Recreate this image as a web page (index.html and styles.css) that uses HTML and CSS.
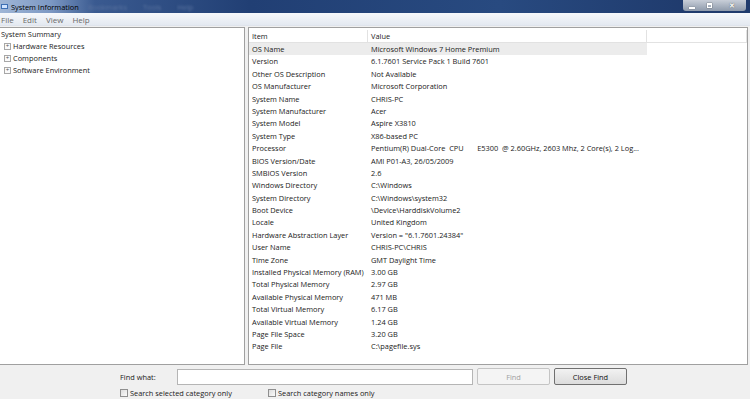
FILE: index.html
```html
<!DOCTYPE html>
<html>
<head>
<meta charset="utf-8">
<link rel="stylesheet" href="styles.css">
</head>
<body>
<div class="window">
  <div class="titlebar">
    <div class="title">
      <svg class="appicon" width="7" height="7" viewBox="0 0 7 7"><rect x="0" y="1" width="7" height="5" fill="#3c6fb4"/><rect x="1" y="2" width="5" height="3" fill="#cfe3ff"/></svg>
      <span>System Information</span>
    </div>
    <div class="ghost">
      <span>Bookmarks</span><span>Tools</span><span>Help</span>
    </div>
    <div class="controls">
      <span class="ctl min"><i></i></span>
      <span class="ctl max"><i></i></span>
      <span class="ctl close">&#x2715;</span>
    </div>
  </div>
  <div class="menubar">
    <span>File</span><span>Edit</span><span>View</span><span>Help</span>
  </div>
  <div class="main">
    <div class="tree">
      <div class="node root">System Summary</div>
      <div class="node"><span class="plus">+</span>Hardware Resources</div>
      <div class="node"><span class="plus">+</span>Components</div>
      <div class="node"><span class="plus">+</span>Software Environment</div>
    </div>
    <div class="list">
      <div class="head">
        <div class="hc c1">Item</div>
        <div class="hc c2">Value</div>
        <div class="hc c3"></div>
      </div>
      <div class="rows">
        <div class="row sel"><div class="c1">OS Name</div><div class="c2">Microsoft Windows 7 Home Premium</div></div>
        <div class="row"><div class="c1">Version</div><div class="c2">6.1.7601 Service Pack 1 Build 7601</div></div>
        <div class="row"><div class="c1">Other OS Description</div><div class="c2">Not Available</div></div>
        <div class="row"><div class="c1">OS Manufacturer</div><div class="c2">Microsoft Corporation</div></div>
        <div class="row"><div class="c1">System Name</div><div class="c2">CHRIS-PC</div></div>
        <div class="row"><div class="c1">System Manufacturer</div><div class="c2">Acer</div></div>
        <div class="row"><div class="c1">System Model</div><div class="c2">Aspire X3810</div></div>
        <div class="row"><div class="c1">System Type</div><div class="c2">X86-based PC</div></div>
        <div class="row"><div class="c1">Processor</div><div class="c2">Pentium(R) Dual-Core&nbsp; CPU&nbsp;&nbsp;&nbsp;&nbsp;&nbsp;&nbsp; E5300&nbsp; @ 2.60GHz, 2603 Mhz, 2 Core(s), 2 Log...</div></div>
        <div class="row"><div class="c1">BIOS Version/Date</div><div class="c2">AMI P01-A3, 26/05/2009</div></div>
        <div class="row"><div class="c1">SMBIOS Version</div><div class="c2">2.6</div></div>
        <div class="row"><div class="c1">Windows Directory</div><div class="c2">C:\Windows</div></div>
        <div class="row"><div class="c1">System Directory</div><div class="c2">C:\Windows\system32</div></div>
        <div class="row"><div class="c1">Boot Device</div><div class="c2">\Device\HarddiskVolume2</div></div>
        <div class="row"><div class="c1">Locale</div><div class="c2">United Kingdom</div></div>
        <div class="row"><div class="c1">Hardware Abstraction Layer</div><div class="c2">Version = "6.1.7601.24384"</div></div>
        <div class="row"><div class="c1">User Name</div><div class="c2">CHRIS-PC\CHRIS</div></div>
        <div class="row"><div class="c1">Time Zone</div><div class="c2">GMT Daylight Time</div></div>
        <div class="row"><div class="c1">Installed Physical Memory (RAM)</div><div class="c2">3.00 GB</div></div>
        <div class="row"><div class="c1">Total Physical Memory</div><div class="c2">2.97 GB</div></div>
        <div class="row"><div class="c1">Available Physical Memory</div><div class="c2">471 MB</div></div>
        <div class="row"><div class="c1">Total Virtual Memory</div><div class="c2">6.17 GB</div></div>
        <div class="row"><div class="c1">Available Virtual Memory</div><div class="c2">1.24 GB</div></div>
        <div class="row"><div class="c1">Page File Space</div><div class="c2">3.20 GB</div></div>
        <div class="row"><div class="c1">Page File</div><div class="c2">C:\pagefile.sys</div></div>
      </div>
    </div>
  </div>
  <div class="find">
    <div class="findrow">
      <label class="findlabel">Find what:</label>
      <div class="input"></div>
      <div class="btn disabled">Find</div>
      <div class="btn">Close Find</div>
    </div>
    <div class="checks">
      <label class="chk first"><span class="box"></span>Search selected category only</label>
      <label class="chk"><span class="box"></span>Search category names only</label>
    </div>
  </div>
</div>
</body>
</html>
```
FILE: styles.css
```css
* { box-sizing: border-box; }
html, body { margin: 0; padding: 0; }
body {
  width: 750px;
  height: 399px;
  overflow: hidden;
  font-family: "Open Sans", "Noto Sans", sans-serif;
  font-size: 7.4px;
  color: #1a1a1a;
  background: #f0f0f0;
}
.window { width: 750px; height: 399px; display: flex; flex-direction: column; }

.titlebar {
  height: 13px;
  flex: none;
  display: flex;
  align-items: center;
  background: linear-gradient(90deg, #9fb6d6 0px, #7d99c4 50px, #3a5a90 95px, #213f74 250px, #284a80 500px, #1f3a6c 700px);
}
.title { display: flex; align-items: center; gap: 3px; padding-left: 1px; width: 88px; color: #000; flex: none; }
.title span { line-height: 12px; }
.ghost { display: flex; gap: 16px; color: #5b74a0; filter: blur(1.2px); }
.controls { margin-left: auto; display: flex; height: 11px; align-self: flex-start; background: linear-gradient(#c8ced8, #8e9aab); border-radius: 0 0 3px 3px; margin-right: 4px; width: 63px; }
.ctl { flex: 1; display: flex; align-items: center; justify-content: center; color: #fff; font-size: 7px; line-height: 11px; }
.ctl.close { flex: 1.6; font-weight: bold; color: #fff; text-shadow: 0 0 1px #333; }
.ctl.min i { display: block; width: 6px; height: 2px; background: #fff; margin-top: 4px; box-shadow: 0 0 1px #333; }
.ctl.max i { display: block; width: 5px; height: 5px; border: 1px solid #fff; border-top-width: 2px; box-shadow: 0 0 1px #333; }

.menubar {
  height: 13px;
  flex: none;
  display: flex;
  gap: 9px;
  padding-left: 1px;
  align-items: center;
  background: linear-gradient(#f6f8fb, #e4e9f1);
  color: #6a6a6a;
  font-size: 8px;
  border-bottom: 1px solid #dfe4ec;
}

.main { flex: 1; display: flex; gap: 3px; padding-top: 1px; min-height: 0; }
.tree {
  width: 245px;
  background: #fff;
  border: 1px solid #a0a0a0;
  border-left: none;
  padding-top: 0px;
}
.node { height: 12px; line-height: 12px; display: flex; align-items: center; padding-left: 4px; }
.node.root { padding-left: 1px; }
.plus {
  width: 7px; height: 7px; border: 1px solid #a7a7a7; font-size: 6px; line-height: 5px;
  display: inline-flex; justify-content: center; color: #555; margin-right: 2px; background: #fafafa;
}

.list {
  width: 500px;
  background: #fff;
  border: 1px solid #a0a0a0;
  display: flex;
  flex-direction: column;
  padding-top: 2px;
}
.head { display: flex; height: 13px; border-bottom: 1px solid #e2e2e2; flex: none; }
.hc { line-height: 12px; padding-left: 3px; border-right: 1px solid #e2e2e2; }
.c1 { width: 119px; flex: none; padding-left: 3px; white-space: nowrap; }
.c2 { width: 279px; flex: none; white-space: nowrap; overflow: hidden; }
.hc.c2 { padding-left: 3px; }
.c3 { flex: 1; }
.rows { display: flex; flex-direction: column; }
.row { display: flex; height: 12.4px; line-height: 12.4px; }
.row .c1 { padding-left: 3px; }
.row .c2 { padding-left: 3px; }
.row.sel { background: linear-gradient(90deg, #ececec 398px, transparent 398px); }

.find { height: 34px; flex: none; padding-left: 120px; padding-top: 3px; display: flex; flex-direction: column; gap: 3px; }
.findrow { display: flex; align-items: center; height: 17px; }
.findlabel { width: 57px; }
.input { width: 296px; height: 16px; background: #fff; border: 1px solid #b5b5b5; }
.btn {
  margin-left: 4px; width: 73px; height: 17px; border: 1px solid #707070; border-radius: 2px;
  background: linear-gradient(#f2f2f2, #dcdcdc); display: flex; align-items: center; justify-content: center; color: #111;
}
.btn.disabled { border-color: #c4c4c4; background: #f4f4f4; color: #a0a0a0; }
.checks { display: flex; }
.chk { display: flex; align-items: center; gap: 2px; }
.chk.first { width: 148px; }
.box { width: 8px; height: 8px; border: 1px solid #8f8f8f; background: linear-gradient(135deg, #dcdcdc, #fafafa); }
```
